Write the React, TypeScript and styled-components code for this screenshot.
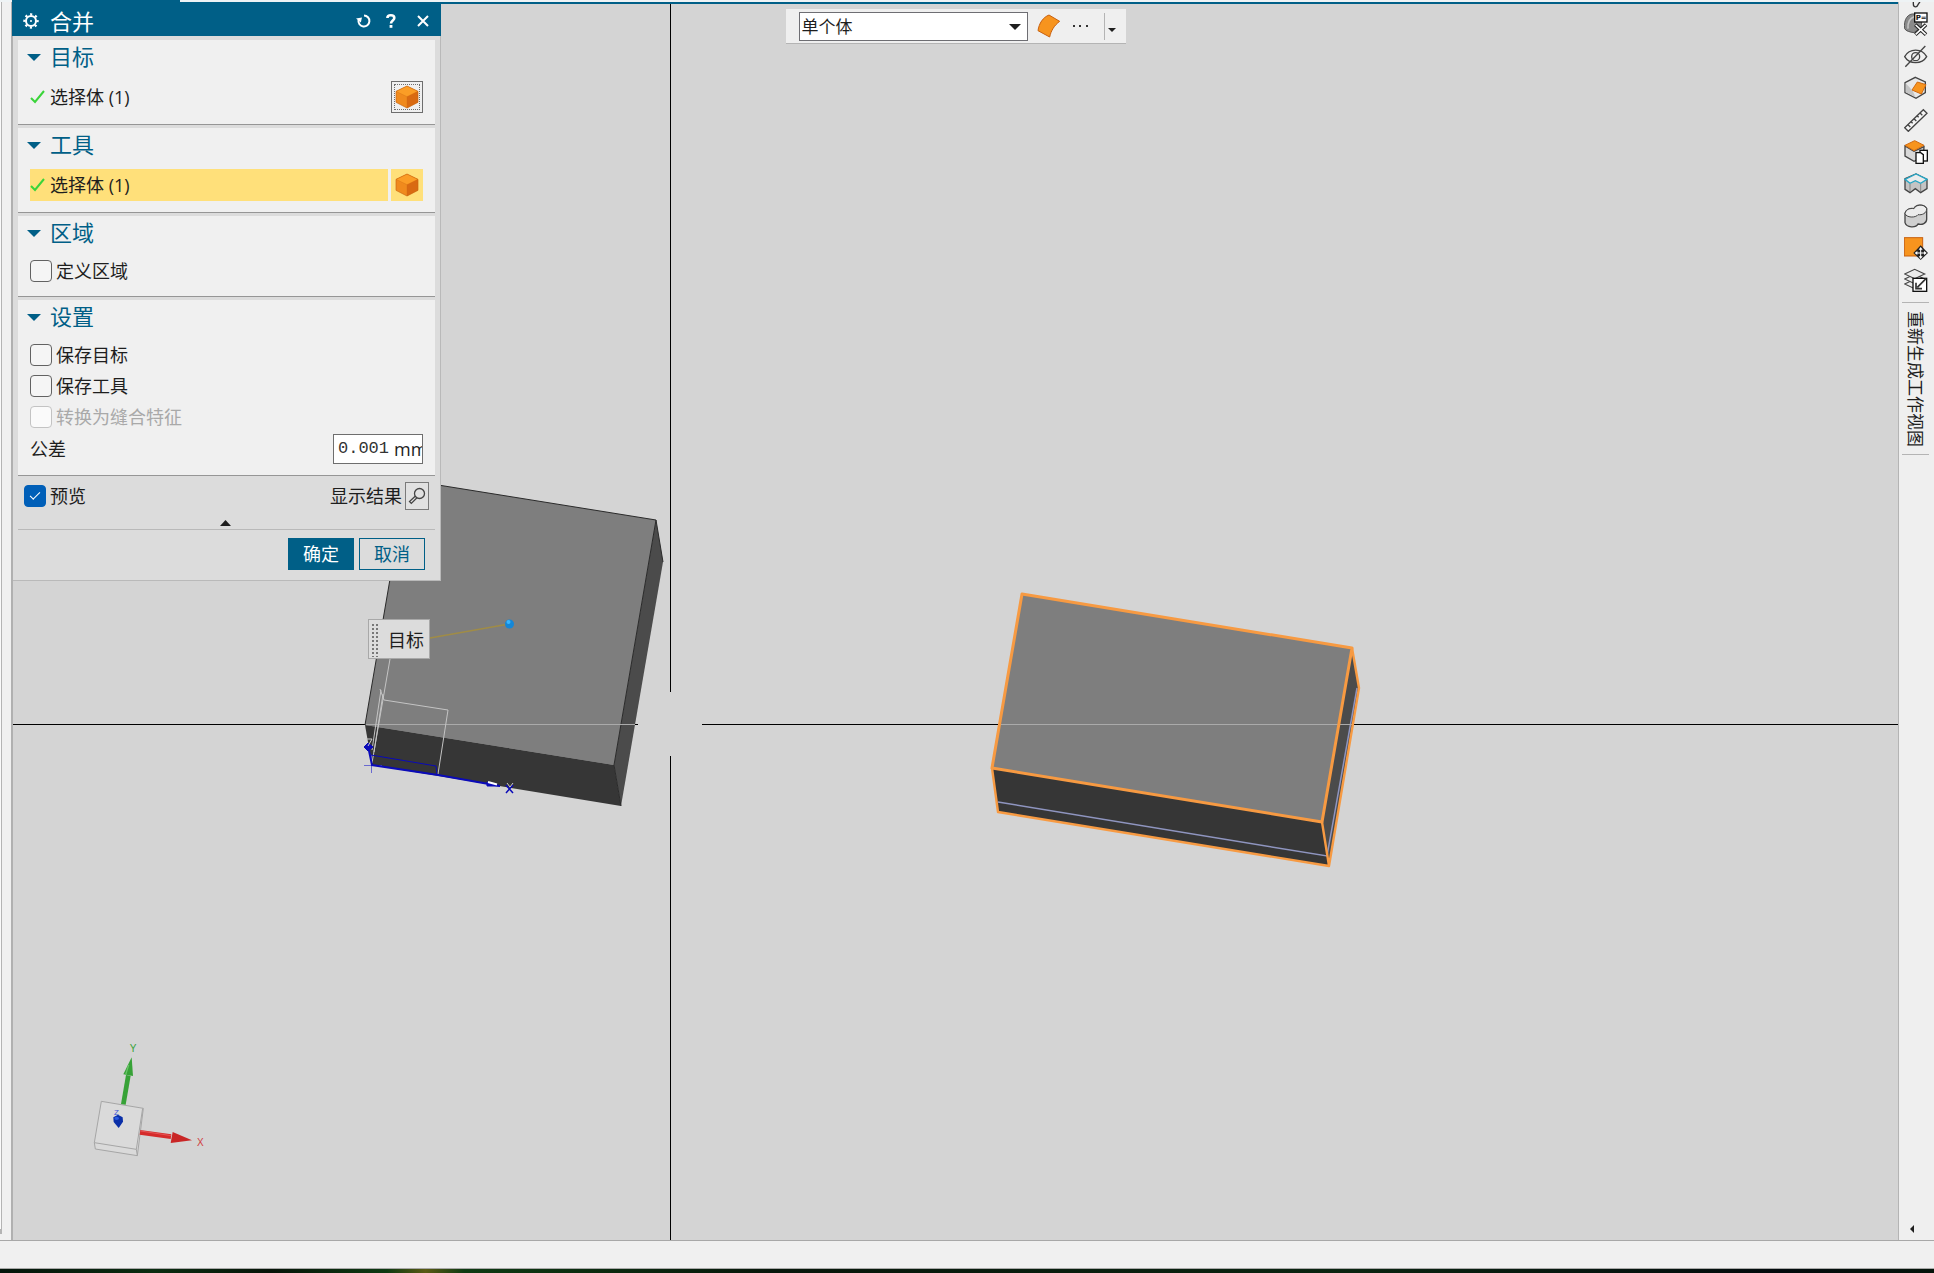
import React, { useState } from "react";
import styled, { createGlobalStyle, css } from "styled-components";

const color = {
  brand: "#005f87",
  panel: "#dcdcdc",
  section: "#f0f0f0",
  canvas: "#d4d4d4",
  line: "#a8a8a8",
  text: "#1e1e1e",
  highlight: "#ffe07a",
};

const Global = createGlobalStyle`
  *, *::before, *::after { box-sizing: border-box; }
  body {
    margin: 0;
    background: ${color.section};
    color: ${color.text};
    font-family: "Open Sans", "Noto Sans CJK SC", sans-serif;
    font-size: 18px;
    line-height: 24px;
  }
  button, input, select { font: inherit; color: inherit; }
`;

const Page = styled.div`
  display: flex;
  flex-direction: column;
  height: 100vh;
  overflow: hidden;
`;

const RibbonEdge = styled.div`
  height: 2px;
  padding-left: 12px;
  background: #eef3f5;
`;

const RibbonTab = styled.div`
  width: 168px;
  height: 2px;
  background: ${color.brand};
`;

const Workspace = styled.main`
  flex: 1;
  display: flex;
  min-height: 0;
`;

const Gutter = styled.div`
  width: 13px;
  padding-bottom: 6px;
  border-right: 2px solid #b0b0b0;
`;

const DockedEdge = styled.div`
  width: 2px;
  height: 100%;
  background: #fafafa;
  border-right: 1px solid #b4b4b4;
  border-bottom: 5px solid #b4b4b4;
`;

const Viewport = styled.section`
  position: relative;
  flex: 1;
  min-width: 0;
  background: ${color.canvas};
  border-top: 2px solid ${color.brand};
`;

const Scene = styled.svg`
  position: absolute;
  inset: 0;
  width: 100%;
  height: 100%;
`;

const TriadDrawing = styled.svg`
  position: absolute;
  left: 57px;
  bottom: 60px;
`;

const StatusBar = styled.footer`
  height: 29px;
  border-top: 1px solid ${color.line};
  border-bottom: 1px solid ${color.line};
`;

const DesktopStrip = styled.div`
  height: 4px;
  background: linear-gradient(90deg, #04140a, #0a2c10 8%, #061408 14%, #0e3a12 20%, #5a5a14 22%, #0e3a12 24%, #06160a 40%, #0a2410 70%, #020a0c 92%, #04140a);
`;

/* Selection bar */
const SelectionBar = styled.div`
  position: relative;
  display: flex;
  align-items: center;
  width: 340px;
  height: 35px;
  margin: 5px auto 0;
  padding: 0 6px 0 13px;
  background: #efefef;
  border-bottom: 1px solid #b4b4b4;
`;

const SelectWrap = styled.div`
  position: relative;
  display: flex;
  width: 229px;
  margin-right: 8px;
  svg {
    position: absolute;
    right: 7px;
    top: 12px;
    pointer-events: none;
  }
`;

const Select = styled.select`
  appearance: none;
  width: 100%;
  height: 29px;
  padding: 1px 24px 0 2px;
  border: 1px solid #6e6e73;
  border-radius: 0;
  background: #fff;
  font-size: 17px;
`;

const FlatButton = styled.button<{ $w: number; $h?: number; $low?: boolean }>`
  display: flex;
  flex: none;
  align-items: center;
  justify-content: center;
  width: ${(p) => p.$w}px;
  height: ${(p) => p.$h ?? 28}px;
  padding: ${(p) => (p.$low ? "8px 0 0" : "0")};
  border: 0;
  background: none;
`;

const BarDivider = styled.div`
  width: 1px;
  height: 27px;
  margin-left: auto;
  background: #b4b4b4;
`;

/* Dialog */
const Dialog = styled.form`
  position: absolute;
  left: 0;
  top: -2px;
  width: 428px;
  background: ${color.panel};
  border-right: 1px solid #b9b9b9;
  border-bottom: 1px solid #b9b9b9;
`;

const TitleBar = styled.header`
  display: flex;
  align-items: center;
  width: 429px;
  height: 34px;
  margin-left: -1px;
  padding: 3px 2px 0 11px;
  background: ${color.brand};
  color: #fff;
`;

const Title = styled.h1`
  flex: 1;
  margin: 0 0 0 11px;
  font-size: 22px;
  font-weight: 400;
  line-height: 30px;
`;

const TitleActions = styled.div`
  display: flex;
  gap: 4px;
`;

const Sections = styled.div`
  display: flex;
  flex-direction: column;
  gap: 3px;
  padding: 4px 5px 0;
`;

const Section = styled.section`
  padding: 0 12px 10px;
  background: ${color.section};
  border-bottom: 1px solid #969696;
`;

const SectionTitle = styled.h2`
  display: flex;
  align-items: center;
  gap: 9px;
  height: 35px;
  margin: 0 0 0 -3px;
  padding-bottom: 3px;
  color: ${color.brand};
  font-size: 22px;
  font-weight: 400;
  svg {
    margin-top: 3px;
  }
`;

const PickRow = styled.div`
  display: flex;
  gap: 3px;
  padding: 6px 0 1px;
`;

const PickLabel = styled.div<{ $active?: boolean }>`
  display: flex;
  flex: 1;
  align-items: center;
  gap: 5px;
  height: 32px;
  background: ${(p) => (p.$active ? color.highlight : "transparent")};
`;

const PickButton = styled.button<{ $active?: boolean }>`
  display: flex;
  align-items: center;
  justify-content: center;
  width: 32px;
  height: 32px;
  padding: 0;
  border: 0;
  background: ${color.highlight};
  ${(p) =>
    !p.$active &&
    css`
      border: 1px solid #6e6e6e;
      background: ${color.section};
      outline: 1px dotted #6e6e6e;
      outline-offset: -4px;
    `}
`;

const Fields = styled.div`
  padding-top: 4px;
`;

const FieldRow = styled.div`
  display: flex;
  align-items: center;
  justify-content: space-between;
  height: 33px;
`;

const CheckLabel = styled.label<{ $disabled?: boolean }>`
  display: flex;
  align-items: center;
  gap: 4px;
  height: 31px;
  color: ${(p) => (p.$disabled ? "#a9a9a9" : "inherit")};
`;

const CheckBox = styled.input`
  appearance: none;
  display: grid;
  place-items: center;
  width: 22px;
  height: 22px;
  margin: 0;
  border: 1px solid #626262;
  border-radius: 4px;
  background: #f5f5f5;
  &:disabled {
    border-color: #c3c3c3;
    background: #fafafa;
  }
  &:checked {
    border-color: #005fb8;
    background: #005fb8;
  }
  &:checked::after {
    content: "";
    width: 10px;
    height: 5px;
    margin-top: -3px;
    border: solid #fff;
    border-width: 0 0 1px 1px;
    transform: rotate(-45deg);
  }
`;

const MeasureBox = styled.div`
  display: flex;
  align-items: center;
  width: 90px;
  height: 30px;
  padding-left: 4px;
  overflow: hidden;
  border: 1px solid #6e6e6e;
  background: #fff;
`;

const MeasureInput = styled.input`
  flex: none;
  width: 56px;
  padding: 0;
  border: 0;
  outline: 0;
  background: none;
  color: #333;
  font-family: "Liberation Mono", monospace;
  font-size: 17px;
`;

const PreviewRow = styled.div`
  display: flex;
  align-items: center;
  justify-content: space-between;
  height: 34px;
  padding: 6px 11px 0;
`;

const ResultGroup = styled.div`
  display: flex;
  align-items: center;
  gap: 3px;
`;

const ResultButton = styled.button`
  display: flex;
  align-items: center;
  justify-content: center;
  width: 24px;
  height: 28px;
  padding: 0;
  border: 1px solid #7a7a7a;
  background: #e1e1e1;
`;

const Collapser = styled.button`
  display: flex;
  align-items: center;
  justify-content: center;
  width: 417px;
  height: 20px;
  margin-left: 5px;
  padding: 7px 2px 0 0;
  border: 0;
  border-bottom: 1px solid #b9b9b9;
  background: none;
`;

const Actions = styled.div`
  display: flex;
  justify-content: flex-end;
  gap: 5px;
  padding: 8px 15px 10px;
`;

const ActionButton = styled.button<{ $primary?: boolean }>`
  width: 66px;
  height: 32px;
  padding: 0;
  border: 1px solid ${color.brand};
  background: ${(p) => (p.$primary ? color.brand : "transparent")};
  color: ${(p) => (p.$primary ? "#fff" : color.brand)};
`;

/* Callout on the model */
const Callout = styled.div`
  position: absolute;
  left: 355px;
  top: 615px;
  display: flex;
  align-items: center;
  gap: 10px;
  width: 62px;
  height: 40px;
  padding: 1px 0 0 2px;
  border: 1px solid #a8a8a8;
  background: ${color.panel};
  white-space: nowrap;
`;

const Grip = styled.div`
  flex: none;
  width: 7px;
  height: 34px;
  background: radial-gradient(circle, #777 1px, transparent 1px) 0 0 / 4px 4px;
`;

/* Right toolbar */
const ToolRail = styled.aside`
  display: flex;
  flex-direction: column;
  align-items: center;
  width: 36px;
  padding-right: 2px;
  border-left: 1px solid #b4b4b4;
  background: #efefef;
`;

const RailPeek = styled.div`
  flex: none;
  display: flex;
  align-items: flex-end;
  height: 6px;
  overflow: hidden;
`;

const RailDivider = styled.div`
  flex: none;
  width: 27px;
  height: 1px;
  background: #b4b4b4;
`;

const RailTab = styled.div`
  display: flex;
  flex: none;
  flex-direction: column;
  align-items: center;
  margin-top: 6px;
`;

const RailText = styled.button`
  margin: 8px 2px 7px 0;
  padding: 0;
  border: 0;
  background: none;
  font-size: 17px;
  line-height: 22px;
  writing-mode: vertical-rl;
  text-orientation: sideways;
  white-space: nowrap;
`;

const RailFoot = styled.div`
  margin-top: auto;
  padding-right: 8px;
  line-height: 0;
`;

const Triangle = ({ w, h, dir = "down", fill = color.text }: { w: number; h: number; dir?: "down" | "up" | "left"; fill?: string }) => {
  const points = {
    down: `0,0 ${w},0 ${w / 2},${h}`,
    up: `0,${h} ${w},${h} ${w / 2},0`,
    left: `${w},0 ${w},${h} 0,${h / 2}`,
  }[dir];
  return (
    <svg width={w} height={h} aria-hidden="true">
      <polygon points={points} fill={fill} />
    </svg>
  );
};

const BodyIcon = () => (
  <svg width="24" height="24" viewBox="0 0 72 72" aria-hidden="true">
    <polygon points="36,3 69,19 69,52 36,69 3,52 3,19" fill="#f08a1d" />
    <polygon points="36,3 69,19 36,35 3,19" fill="#fb9d26" />
    <polygon points="36,35 69,19 69,52 36,69" fill="#d96a12" />
    <path d="M3 19 36 35 69 19M36 35V69" stroke="#cf6a12" strokeWidth="1" fill="none" />
    <polygon points="36,3 69,19 69,52 36,69 3,52 3,19" fill="none" stroke="#c8640f" strokeWidth="2" />
  </svg>
);

const TickIcon = () => (
  <svg width="15" height="14" viewBox="0 0 15 14" aria-hidden="true">
    <path d="M1 8 5 12 14 1" fill="none" stroke="#3ad43a" strokeWidth="2" />
  </svg>
);

const GearIcon = () => (
  <svg width="16" height="16" viewBox="0 0 16 16" aria-hidden="true" fill="none" stroke="#fff">
    <circle cx="8" cy="8" r="5" strokeWidth="2" />
    <circle cx="8" cy="8" r="6.6" strokeWidth="2.2" strokeDasharray="2.2 2.98" strokeDashoffset="1.1" />
    <circle cx="8" cy="8" r="1" fill="#fff" stroke="none" />
  </svg>
);

const ResetIcon = () => (
  <svg width="15" height="14" viewBox="0 0 15 14" aria-hidden="true">
    <path d="M8 1.5A5.5 5.5 0 1 1 2.5 6" fill="none" stroke="#fff" strokeWidth="2" />
    <path d="M0 4.5 6 3.5 4.8 8.5Z" fill="#fff" />
  </svg>
);

const HelpIcon = () => (
  <svg width="10" height="14" viewBox="0 0 10 14" aria-hidden="true">
    <path d="M1.4 4C1.4 .4 8.3 .4 8.3 4 8.3 6.5 5 6.4 5 9.4" fill="none" stroke="#fff" strokeWidth="2.6" />
    <rect x="3.6" y="11" width="2.8" height="2.8" fill="#fff" />
  </svg>
);

const CloseIcon = () => (
  <svg width="12" height="12" viewBox="0 0 12 12" aria-hidden="true">
    <path d="M1 1 11 11M11 1 1 11" stroke="#fff" strokeWidth="2" />
  </svg>
);

const MagnifierIcon = () => (
  <svg width="18" height="18" viewBox="0 0 18 18" aria-hidden="true" fill="none" stroke="#444">
    <circle cx="11.5" cy="6.5" r="5" strokeWidth="1.3" />
    <path d="M7.2 9.2 1.5 14.5 3.3 16.4 9 10.8" strokeWidth="1.3" />
  </svg>
);

const FaceIcon = () => (
  <svg width="24" height="24" viewBox="0 0 72 72" aria-hidden="true">
    <path d="M3 50C6 28 18 10 36 3L68 22C52 34 42 50 38 69Z" fill="#f7941e" stroke="#c8600f" strokeWidth="3" />
  </svg>
);

const DotsIcon = () => (
  <svg width="16" height="3" aria-hidden="true">
    {[0, 6, 13].map((x) => (
      <rect key={x} x={x} width="2" height="2" fill="#333" />
    ))}
  </svg>
);

const railIcons: { label: string; art: React.ReactNode }[] = [
  {
    label: "P=",
    art: (
      <>
        <path d="M2 50C-2 22 12 3 32 6L54 18 50 60 40 54 30 62C18 60 6 58 2 50Z" fill="#8a8a8a" stroke="#555" strokeWidth="3" />
        <path d="M12 50C10 32 18 18 30 14" fill="none" stroke="#c4c4c4" strokeWidth="5" />
        <path d="M34 38 66 68M66 38 34 68" stroke="#222" strokeWidth="11" />
        <path d="M35 39 65 67M65 39 35 67" stroke="#fff" strokeWidth="5" />
        <rect x="32" y="3" width="37" height="27" fill="#fff" stroke="#111" strokeWidth="4" />
        <text x="35" y="25" fontFamily="DejaVu Sans" fontSize="21" fontWeight="700" fill="#111">P=</text>
      </>
    ),
  },
  {
    label: "隐藏",
    art: (
      <g fill="none" stroke="#444" strokeWidth="4">
        <path d="M2 38C16 12 54 12 68 38C54 62 16 62 2 38Z" />
        <circle cx="35" cy="38" r="12" />
        <path d="M4 68 64 6" />
      </g>
    ),
  },
  {
    label: "倒斜角",
    art: (
      <>
        <polygon points="34,4 64,18 64,50 36,67 3,50 3,20" fill="#e8e8e8" stroke="#444" strokeWidth="4" />
        <polygon points="5,22 26,44 34,63 5,49" fill="#c4c4c4" />
        <polygon points="40,18 66,26 52,54 24,42" fill="#f7941e" stroke="#d16a10" strokeWidth="3" />
      </>
    ),
  },
  {
    label: "测量",
    art: (
      <g fill="#f6f6f6" stroke="#444" strokeWidth="4">
        <polygon points="2,59 58,5 69,16 13,70" />
        <path d="M12 50 19 57M21 41 26 46M30 32 37 39M39 23 44 28M48 15 55 22" />
      </g>
    ),
  },
  {
    label: "复制体",
    art: (
      <>
        <polygon points="3,18 30,34 60,20 58,52 30,64 3,48" fill="#d8d8d8" stroke="#444" strokeWidth="4" />
        <polygon points="3,16 32,2 60,16 30,32" fill="#f7941e" stroke="#d16a10" strokeWidth="3" />
        <rect x="48" y="31" width="22" height="32" fill="#fff" stroke="#111" strokeWidth="4" />
        <path d="M36 38H50L58 44V70H36Z" fill="#fff" stroke="#111" strokeWidth="4" />
      </>
    ),
  },
  {
    label: "拉伸",
    art: (
      <>
        <path d="M3 20V52L18 62 34 50 50 62 69 50V22L36 6Z" fill="#c4c4c4" stroke="#444" strokeWidth="4" />
        <polygon points="3,22 36,6 69,22 50,34 34,26 18,34" fill="#ececec" stroke="#27a5c4" strokeWidth="4" />
        <path d="M18 36V60M50 36V60" stroke="#666" strokeWidth="2" />
      </>
    ),
  },
  {
    label: "合并",
    art: (
      <>
        <path d="M3 28V56C8 72 36 72 42 60C54 64 68 58 68 46V14C60 -2 34 2 30 14C18 12 6 16 3 28Z" fill="#cfcfcf" stroke="#444" strokeWidth="4" />
        <path d="M3 28C6 42 36 42 42 32C54 34 68 28 68 14C60 -2 34 2 30 14C18 12 6 16 3 28Z" fill="#ececec" stroke="#444" strokeWidth="3" />
      </>
    ),
  },
  {
    label: "移动面",
    art: (
      <>
        <rect x="1" y="5" width="55" height="55" fill="#f7941e" stroke="#c8600f" strokeWidth="3" />
        <polygon points="50,28 72,51 50,72 28,51" fill="#222" />
        <path d="M50 37V65M36 51H64" stroke="#fff" strokeWidth="3" />
        <path d="M50 33 56 41H44ZM50 69 56 61H44ZM32 51 40 45V57ZM68 51 60 45V57Z" fill="#fff" />
      </>
    ),
  },
  {
    label: "图层",
    art: (
      <g stroke="#444" strokeWidth="3.5" fill="#ececec">
        <polygon points="2,48 32,34 62,48 32,62" />
        <polygon points="2,33 32,19 62,33 32,47" />
        <polygon points="2,18 32,4 62,18 32,32" />
        <rect x="27" y="31" width="41" height="39" fill="#fff" stroke="#111" strokeWidth="4" />
        <path d="M66 32 40 58M36 44V62H54" fill="none" stroke="#333" strokeWidth="5" />
      </g>
    ),
  },
];

const RailIcon = ({ children }: { children: React.ReactNode }) => (
  <svg width="24" height="24" viewBox="0 0 72 72" aria-hidden="true">{children}</svg>
);

const ModelScene = () => (
  <Scene aria-label="模型视图">
    <g transform="translate(-13 -4)">
      <g shapeRendering="crispEdges" stroke="#000">
        <path d="M670.5 4V692M670.5 756V1240" />
        <path d="M12 724.5H638M702 724.5H9000" />
      </g>

      <polygon points="407,480 656,520 614,765 365,725" fill="#7e7e7e" />
      <polygon points="365,725 614,765 621,806 372,765" fill="#363636" />
      <polygon points="656,520 663,562 621,806 614,765" fill="#4b4b4b" />
      <path d="M407 480 656 520 614 765 621 806M365 725 407 480M656 520 663 562" fill="none" stroke="#2a2a2a" />
      <path d="M366 724.5H635" stroke="#aaa" />
      <path d="M430 638 509 624" stroke="#a08c46" strokeWidth="1.3" />
      <circle cx="509.5" cy="624" r="4.500" fill="#1487d8" />
      <circle cx="508.5" cy="622" r="2" fill="#38b6ff" />

      <g fill="none" stroke="#c4c4c4">
        <path d="M390 659 372 763M381 690 372 750M380 689 384 700 448 710 438 774M383 694 374 752" />
      </g>
      <g fill="none" stroke="#0a0ab8">
        <path d="M364 765.5H382M371.5 755V773" stroke="#6a6ad0" />
        <path d="M368 746 372 765 438 775" strokeWidth="2" />
        <path d="M371 755 436 766 437 775" />
        <path d="M438 775 500 786" strokeWidth="2" />
        <path d="M506 793 513 785M506 785 513 793" strokeWidth="1.5" />
        <path d="M364 747 368 743 373 747 368 751Z" fill="#0a0ab8" />
        <path d="M487 782 500 786 487 786Z" fill="#0a0ab8" />
      </g>
      <path d="M488 782 497 784.5" stroke="#fff" strokeWidth="2" />
      <path d="M366 739H372L368 746M507 783 510 787 513 783" stroke="#ccc" fill="none" />

      <polygon points="1022,594 1352,648 1322,822 992,768" fill="#7e7e7e" />
      <polygon points="992,768 1322,822 1329,866 998,812" fill="#363636" />
      <polygon points="1352,648 1359,688 1329,866 1322,822" fill="#4b4b4b" />
      <path d="M998 802 1327 856 1357 688" fill="none" stroke="#8f95c0" strokeWidth="1.5" />
      <path d="M1000 724.5H1352" stroke="#aaa" />
      <g fill="none" stroke="#f79a42" strokeLinejoin="round">
        <path d="M1022 594 1352 648 1322 822 992 768Z" strokeWidth="3" />
        <path d="M992 768 998 812 1329 866 1359 688 1352 648M1322 822 1329 866" strokeWidth="2.4" />
      </g>
    </g>
  </Scene>
);

const Triad = () => (
  <TriadDrawing width="160" height="150" viewBox="0 0 480 450" aria-label="坐标轴">
    <path d="M94 214 220 235 202 377 76 357 73 338Z" fill="#dadada" stroke="#a6a6a6" strokeWidth="3" />
    <path d="M73 338 199 358 218 235M199 358 202 377" fill="none" stroke="#a6a6a6" strokeWidth="3" />
    <polygon points="153,222 167,224 182,137 168,135" fill="#37a237" />
    <polygon points="185,82 160,133 189,138" fill="#37a237" />
    <path d="M176 105 167 134" stroke="#69c469" strokeWidth="4" />
    <polygon points="211,300 304,313 302,327 209,314" fill="#d52b2b" />
    <polygon points="308,306 366,331 302,339" fill="#c92626" />
    <path d="M212 303 304 317" stroke="#ef6a6a" strokeWidth="2" />
    <path d="M144 254 158 262 159 275 146 294 131 276 130 262Z" fill="#0a2fa8" />
    <ellipse cx="140" cy="265" rx="7" ry="5" fill="#2c5be0" />
    <g fontFamily="Liberation Sans" fontSize="30">
      <text x="179" y="65" fill="#37a237">Y</text>
      <text x="381" y="347" fill="#d04040">X</text>
    </g>
    <text x="132" y="256" fontFamily="Liberation Sans" fontSize="24" fill="#3a56d8">Z</text>
  </TriadDrawing>
);

const MergeDialog = () => {
  const [tolerance, setTolerance] = useState("0.001");
  return (
    <Dialog onSubmit={(e) => e.preventDefault()} aria-label="合并">
      <TitleBar>
        <GearIcon />
        <Title>合并</Title>
        <TitleActions>
          <FlatButton type="button" $w={24} aria-label="重置"><ResetIcon /></FlatButton>
          <FlatButton type="button" $w={24} aria-label="帮助"><HelpIcon /></FlatButton>
          <FlatButton type="button" $w={32} aria-label="关闭"><CloseIcon /></FlatButton>
        </TitleActions>
      </TitleBar>
      <Sections>
        <Section>
          <SectionTitle><Triangle w={14} h={7} fill={color.brand} />目标</SectionTitle>
          <PickRow>
            <PickLabel><TickIcon />选择体 (1)</PickLabel>
            <PickButton type="button" aria-label="选择目标体"><BodyIcon /></PickButton>
          </PickRow>
        </Section>
        <Section>
          <SectionTitle><Triangle w={14} h={7} fill={color.brand} />工具</SectionTitle>
          <PickRow>
            <PickLabel $active><TickIcon />选择体 (1)</PickLabel>
            <PickButton type="button" $active aria-label="选择工具体"><BodyIcon /></PickButton>
          </PickRow>
        </Section>
        <Section>
          <SectionTitle><Triangle w={14} h={7} fill={color.brand} />区域</SectionTitle>
          <Fields>
            <CheckLabel><CheckBox type="checkbox" />定义区域</CheckLabel>
          </Fields>
        </Section>
        <Section>
          <SectionTitle><Triangle w={14} h={7} fill={color.brand} />设置</SectionTitle>
          <Fields>
            <CheckLabel><CheckBox type="checkbox" />保存目标</CheckLabel>
            <CheckLabel><CheckBox type="checkbox" />保存工具</CheckLabel>
            <CheckLabel $disabled><CheckBox type="checkbox" disabled />转换为缝合特征</CheckLabel>
            <FieldRow>
              <label htmlFor="tolerance">公差</label>
              <MeasureBox>
                <MeasureInput id="tolerance" value={tolerance} onChange={(e) => setTolerance(e.target.value)} />
                <span>mm</span>
              </MeasureBox>
            </FieldRow>
          </Fields>
        </Section>
      </Sections>
      <PreviewRow>
        <CheckLabel><CheckBox type="checkbox" defaultChecked />预览</CheckLabel>
        <ResultGroup>
          <span>显示结果</span>
          <ResultButton type="button" aria-label="显示结果"><MagnifierIcon /></ResultButton>
        </ResultGroup>
      </PreviewRow>
      <Collapser type="button" aria-label="折叠"><Triangle w={11} h={6} dir="up" /></Collapser>
      <Actions>
        <ActionButton $primary type="submit">确定</ActionButton>
        <ActionButton type="button">取消</ActionButton>
      </Actions>
    </Dialog>
  );
};

export default function App() {
  return (
    <>
      <Global />
      <Page>
        <RibbonEdge><RibbonTab /></RibbonEdge>
        <Workspace>
          <Gutter><DockedEdge /></Gutter>
          <Viewport>
            <ModelScene />
            <Triad />
            <SelectionBar>
              <SelectWrap>
                <Select aria-label="选择范围" defaultValue="单个体">
                  <option>单个体</option>
                </Select>
                <Triangle w={12} h={6} />
              </SelectWrap>
              <FlatButton type="button" $w={26} aria-label="面"><FaceIcon /></FlatButton>
              <FlatButton type="button" $w={38} aria-label="更多"><DotsIcon /></FlatButton>
              <BarDivider />
              <FlatButton type="button" $w={15} $low aria-label="工具条选项"><Triangle w={8} h={4} /></FlatButton>
            </SelectionBar>
            <Callout><Grip />目标</Callout>
            <MergeDialog />
          </Viewport>
          <ToolRail>
            <RailPeek>
              <RailIcon>
                <path d="M28 54V60C28 70 38 72 42 62L50 50" fill="none" stroke="#333" strokeWidth="4" />
              </RailIcon>
            </RailPeek>
            {railIcons.map((icon) => (
              <FlatButton key={icon.label} type="button" $w={32} $h={32} aria-label={icon.label}>
                <RailIcon>{icon.art}</RailIcon>
              </FlatButton>
            ))}
            <RailTab>
              <RailDivider />
              <RailText type="button">重新生成工作视图</RailText>
              <RailDivider />
            </RailTab>
            <RailFoot>
              <FlatButton type="button" $w={14} $h={23} aria-label="展开"><Triangle w={4} h={8} dir="left" /></FlatButton>
            </RailFoot>
          </ToolRail>
        </Workspace>
        <StatusBar />
        <DesktopStrip />
      </Page>
    </>
  );
}
